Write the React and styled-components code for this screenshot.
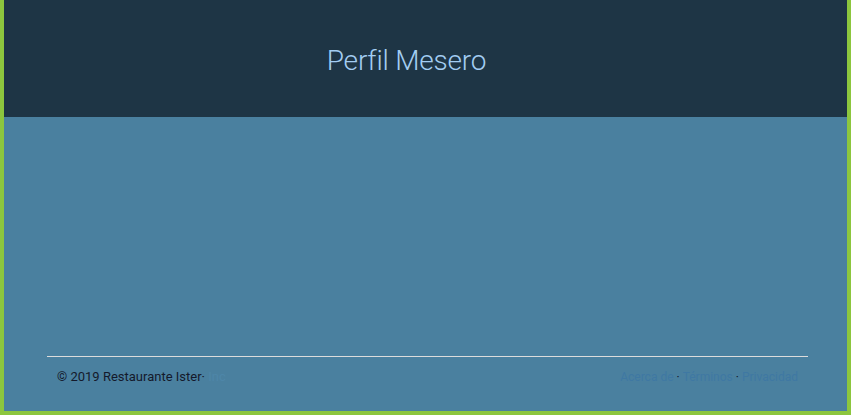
import React from 'react';
import styled, { createGlobalStyle } from 'styled-components';

const GlobalStyle = createGlobalStyle`
  html, body {
    margin: 0;
    padding: 0;
    height: 100%;
  }
  body {
    font-family: Roboto, "Liberation Sans", sans-serif;
  }
  #root {
    height: 100%;
  }
`;

const Page = styled.div`
  box-sizing: border-box;
  height: 415px;
  display: flex;
  flex-direction: column;
  background-color: #4a809f;
  border-left: 4px solid #8cc63e;
  border-right: 4px solid #8cc63e;
  border-bottom: 4px solid #8cc63e;
`;

const Header = styled.header`
  height: 117px;
  background-color: #1e3545;
  display: flex;
  align-items: center;
  justify-content: center;
  padding-right: 38px;
  padding-top: 4px;
  box-sizing: border-box;
`;

const Title = styled.h1`
  margin: 0;
  font-family: Roboto, "Liberation Sans", sans-serif;
  font-weight: 300;
  font-size: 28px;
  color: #a3cdf2;
  letter-spacing: -0.2px;
`;

const Main = styled.main`
  flex: 1;
`;

const Footer = styled.footer`
  margin: 0 39px 0 43px;
  border-top: 1px solid #dcdcdc;
  height: 55px;
  display: flex;
  justify-content: space-between;
  align-items: flex-start;
  padding: 12px 10px 0 10px;
  box-sizing: border-box;
  font-size: 13px;
  color: #14192b;
`;

const Copy = styled.span``;

const Links = styled.div`
  display: flex;
  gap: 3px;
  margin-left: auto;
  font-size: 12px;
  padding-top: 1px;
`;

const Link = styled.a`
  color: ${p => (p.faint ? '#4e86a8' : '#3f78a3')};
  text-decoration: none;
`;

const Dot = styled.span`
  color: #14192b;
`;

export default function App() {
  return (
    <>
      <GlobalStyle />
      <Page>
        <Header>
          <Title>Perfil Mesero</Title>
        </Header>
        <Main />
        <Footer>
          <Copy>
            © 2019 Restaurante Ister· <Link faint href="#">Inc</Link>
          </Copy>
          <Links>
            <Link href="#">Acerca de</Link>
            <Dot>·</Dot>
            <Link href="#">Términos</Link>
            <Dot>·</Dot>
            <Link href="#">Privacidad</Link>
          </Links>
        </Footer>
      </Page>
    </>
  );
}
